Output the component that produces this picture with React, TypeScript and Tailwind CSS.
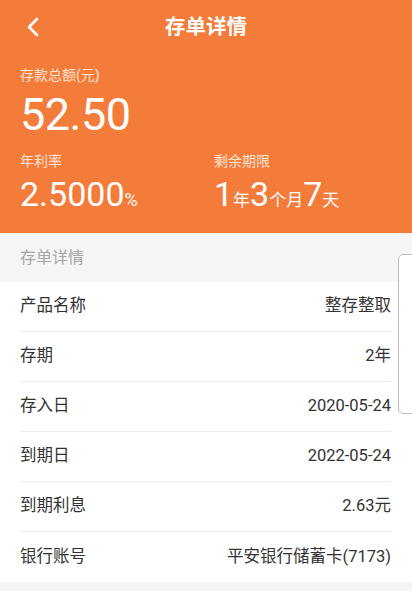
import React from "react";

const rows: [string, string][] = [
  ["产品名称", "整存整取"],
  ["存期", "2年"],
  ["存入日", "2020-05-24"],
  ["到期日", "2022-05-24"],
  ["到期利息", "2.63元"],
  ["银行账号", "平安银行储蓄卡(7173)"],
];

const font = { fontFamily: "Roboto, 'Noto Sans CJK SC', sans-serif" };

export default function App() {
  return (
    <div className="relative h-[591px] w-[412px] overflow-hidden bg-[#f5f5f5]" style={font}>
      <div className="h-[233px] bg-[#f47c3b] text-white">
        <div className="relative flex h-[54px] items-center justify-center">
          <svg className="absolute left-[24px] top-[16px]" width="18" height="22" viewBox="0 0 18 22" fill="none">
            <path d="M13 3 L5 11 L13 19" stroke="white" strokeWidth="2.6" strokeLinecap="round" strokeLinejoin="round" />
          </svg>
          <span className="text-[20.5px] font-bold">存单详情</span>
        </div>
        <div className="px-[20px]">
          <div className="mt-[11px] text-[14px] leading-[20px] text-[#fde3d3]">存款总额(元)</div>
          <div className="mt-[6px] text-[45px] leading-[48px] tracking-[-0.5px]">52.50</div>
          <div className="mt-[12px] flex">
            <div className="w-[194px]">
              <div className="text-[14px] leading-[20px] text-[#fde3d3]">年利率</div>
              <div className="mt-[4px] text-[34px] leading-[38px]">
                2.5000<span className="text-[18px]">%</span>
              </div>
            </div>
            <div>
              <div className="text-[14px] leading-[20px] text-[#fde3d3]">剩余期限</div>
              <div className="mt-[4px] text-[34px] leading-[38px]">
                1<span className="text-[17px]">年</span>3<span className="text-[17px]">个月</span>7
                <span className="text-[17px]">天</span>
              </div>
            </div>
          </div>
        </div>
      </div>
      <div className="flex h-[49px] items-center px-[20px] text-[16px] text-[#a6a6a6]">存单详情</div>
      <div className="bg-white px-[20px] pr-[21px]">
        {rows.map(([k, v], i) => (
          <div
            key={k}
            className={`flex h-[50px] items-center justify-between text-[16.5px] text-[#333333] ${
              i < rows.length - 1 ? "border-b border-[#ececec]" : ""
            }`}
          >
            <span>{k}</span>
            <span>{v}</span>
          </div>
        ))}
      </div>
      <div className="absolute right-[-6px] top-[254px] h-[160px] w-[20px] rounded-[5px] border border-[#bdbdbd] bg-white" />
    </div>
  );
}
